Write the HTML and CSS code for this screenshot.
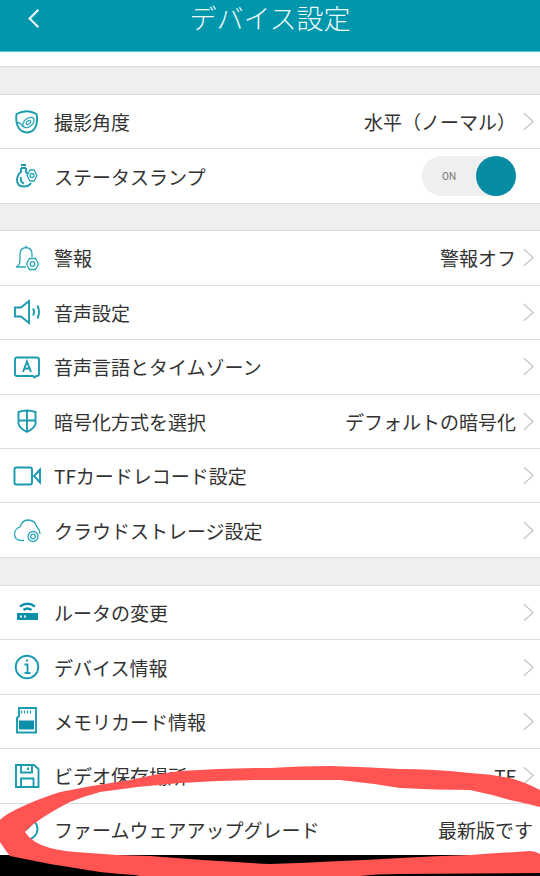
FILE: index.html
```html
<!DOCTYPE html>
<html lang="ja">
<head>
	<meta charset="utf-8">
	<title>デバイス設定</title>
	<link rel="stylesheet" href="styles.css">
</head>
<body>
<div class="screen">
	<div class="header">
		<svg class="back" viewBox="0 0 16 24"><path d="M13 2 L3 12 L13 22"/></svg>
		<div class="title">デバイス設定</div>
	</div>
	<div class="top_space"></div>

	<div class="group first">
		<div class="row">
			<svg class="icon" viewBox="0 0 28 28"><path class="thick" d="M3.5 6 Q14 0.5 23.5 6 Q25.5 17 20 22.5 Q14 26.5 8 22.5 Q2 17 3.5 6Z"/><path d="M4 14.5 Q8 14.5 10 19"/><ellipse cx="15.5" cy="14.5" rx="6.5" ry="4" transform="rotate(-38 15.5 14.5)"/><ellipse cx="15.5" cy="14.5" rx="2.6" ry="1.5" transform="rotate(-38 15.5 14.5)"/></svg>
			<div class="label">撮影角度</div>
			<div class="value">水平（ノーマル）</div>
			<svg class="arrow" viewBox="0 0 12 20"><path d="M1 1 L11 10 L1 19"/></svg>
		</div>
		<div class="row">
			<svg class="icon" viewBox="0 0 28 28"><path class="thick" d="M8 3 H13 M8 6 H13 M8 6 V10 Q4 13 4 18 Q4 24.5 11 24.5 Q16 24.5 18 21 M13 6 V10 L15 12"/><path class="thick" d="M8 15 Q7 20 11 21.5"/><path d="M17 8 L21 8 L24 13.5 L21 19 L17 19 L14 13.5Z"/><circle cx="19" cy="13.5" r="2"/></svg>
			<div class="label">ステータスランプ</div>
			<div class="toggle">
				<div class="toggle_text">ON</div>
				<div class="knob"></div>
			</div>
		</div>
	</div>

	<div class="group">
		<div class="row">
			<svg class="icon" viewBox="0 0 28 28"><path d="M3 23 Q7 22 7 16 L7 10 Q7 4 13 3.5 Q19 4 19 10 L19 13 M3 23 H13 M13 1.5 V3.5"/><path d="M16.5 14.5 L22.5 14.5 L25.5 20 L22.5 25.5 L16.5 25.5 L13.5 20Z"/><circle cx="19.5" cy="20" r="2.3"/></svg>
			<div class="label">警報</div>
			<div class="value">警報オフ</div>
			<svg class="arrow" viewBox="0 0 12 20"><path d="M1 1 L11 10 L1 19"/></svg>
		</div>
		<div class="row">
			<svg class="icon" viewBox="0 0 28 28"><path class="thick" d="M2 9.5 H8 L16 3 V25 L8 18.5 H2Z"/><path class="thick" d="M20 10.5 Q22 14 20 17.5 M24.5 7.5 Q27.5 14 24.5 20.5"/></svg>
			<div class="label">音声設定</div>
			<svg class="arrow" viewBox="0 0 12 20"><path d="M1 1 L11 10 L1 19"/></svg>
		</div>
		<div class="row">
			<svg class="icon" viewBox="0 0 28 28"><path class="thick" d="M4 4.5 H24 Q26 4.5 26 6.5 V21 Q26 23 24 23 H23 L21.5 24.5 L20 23 H4 Q2 23 2 21 V6.5 Q2 4.5 4 4.5Z"/><path class="thick" d="M10 19 L14 8.5 L18 19 M11.5 15.5 H16.5"/></svg>
			<div class="label">音声言語とタイムゾーン</div>
			<svg class="arrow" viewBox="0 0 12 20"><path d="M1 1 L11 10 L1 19"/></svg>
		</div>
		<div class="row">
			<svg class="icon" viewBox="0 0 28 28"><path class="thick" d="M5.5 5 Q14 2 22.5 5 V17 Q21 21.5 14 25 Q7 21.5 5.5 17Z M14 3.5 V24.5 M5.5 13.5 H22.5"/></svg>
			<div class="label">暗号化方式を選択</div>
			<div class="value">デフォルトの暗号化</div>
			<svg class="arrow" viewBox="0 0 12 20"><path d="M1 1 L11 10 L1 19"/></svg>
		</div>
		<div class="row">
			<svg class="icon" viewBox="0 0 28 28"><path class="thick" d="M3 5.5 H17 Q19 5.5 19 7.5 V20.5 Q19 22.5 17 22.5 H3 Q1.5 22.5 1.5 20.5 V7.5 Q1.5 5.5 3 5.5Z M27 7.5 V20.5 L21 14Z"/></svg>
			<div class="label">TFカードレコード設定</div>
			<svg class="arrow" viewBox="0 0 12 20"><path d="M1 1 L11 10 L1 19"/></svg>
		</div>
		<div class="row">
			<svg class="icon" viewBox="0 0 28 28"><path d="M11 24.5 H8 Q1.5 24 1.5 18 Q2 12.5 7 11 Q9 4 15 4 Q22 4 24 11 Q27 14 27 18"/><circle cx="20" cy="20.5" r="5"/><circle cx="20" cy="20.5" r="2.3"/></svg>
			<div class="label">クラウドストレージ設定</div>
			<svg class="arrow" viewBox="0 0 12 20"><path d="M1 1 L11 10 L1 19"/></svg>
		</div>
	</div>

	<div class="group third">
		<div class="row">
			<svg class="icon" viewBox="0 0 28 28"><path class="wifi" d="M7 7.5 Q14.5 2 22 7.5 M10.5 11 Q14.5 8 18.5 11"/><path class="solid" d="M4 14 H25 V21 H4Z"/><path class="dots" d="M7 17.5 H9 M11 17.5 H13"/></svg>
			<div class="label">ルータの変更</div>
			<svg class="arrow" viewBox="0 0 12 20"><path d="M1 1 L11 10 L1 19"/></svg>
		</div>
		<div class="row">
			<svg class="icon" viewBox="0 0 28 28"><circle class="thick" cx="14" cy="14" r="11.3"/><path class="thick" d="M11.5 11.5 H14.5 V20 M11.5 20 H17.5 M14 6.5 V8.5"/></svg>
			<div class="label">デバイス情報</div>
			<svg class="arrow" viewBox="0 0 12 20"><path d="M1 1 L11 10 L1 19"/></svg>
		</div>
		<div class="row">
			<svg class="icon" viewBox="0 0 28 28"><path class="thick" d="M6 1 H23 V25.5 H4 V11 L6 9Z"/><path d="M8.5 3.5 V6.5 M11.5 3.5 V6.5 M14.5 3.5 V6.5 M17.5 3.5 V6.5"/><path class="solid" d="M6 13.5 H21 V22.5 H6Z"/></svg>
			<div class="label">メモリカード情報</div>
			<svg class="arrow" viewBox="0 0 12 20"><path d="M1 1 L11 10 L1 19"/></svg>
		</div>
		<div class="row">
			<svg class="icon" viewBox="0 0 28 28"><path class="thick" d="M3 3 H21 L25.5 7 V25 H3Z M8 3 V10.5 H19 V3 M15 5.5 V8 M8 25 V16.5 H20.5 V25"/></svg>
			<div class="label">ビデオ保存場所</div>
			<div class="value">TF</div>
			<svg class="arrow" viewBox="0 0 12 20"><path d="M1 1 L11 10 L1 19"/></svg>
		</div>
		<div class="row last">
			<svg class="icon" viewBox="0 0 28 28"><circle class="thick" cx="14" cy="14" r="10.5"/><path class="thick" d="M14 7 V14 L18 10"/></svg>
			<div class="label">ファームウェアアップグレード</div>
			<div class="value">最新版です</div>
		</div>
	</div>
	<div class="navbar"></div>

	<svg class="scribble" viewBox="0 0 540 876"><path d="M540 790 Q525 782 510 778 Q490 774 470 773 Q435 769 400 769 Q365 767 330 766 Q300 766 270 768 Q225 768 180 771 Q155 774 130 780 Q95 785 60 792 Q35 800 15 810 Q5 815 0 820 L0 842 Q5 850 10 856 Q30 860 50 864 Q75 868 100 872 Q118 874 135 875 L140 876 L360 876 Q375 874 400 874 L540 873 L540 854 Q535 851 530 851 Q500 853 470 855 Q435 856 400 858 Q370 860 340 861 Q305 863 270 864 Q210 861 150 856 Q120 856 90 853 Q65 852 50 848 Q32 843 25 832 Q28 828 35 823 Q50 812 70 802 Q85 796 100 792 Q140 786 180 783 Q225 780 270 780 L340 780 Q370 783 400 788 Q435 790 470 790 Q490 794 510 800 Q525 803 540 807Z"/></svg>
</div>
</body>
</html>
```

FILE: styles.css
```css
html, body {
	margin: 0;
	padding: 0;
}

.screen {
	position: relative;
	width: 540px;
	height: 876px;
	overflow: hidden;
	background: #efefef;
	font-family: "Noto Sans CJK JP", "Noto Sans", sans-serif;
	color: #333333;
}

.header {
	display: flex;
	align-items: flex-start;
	justify-content: center;
	position: relative;
	height: 51px;
	background: #0097ac;
	border-bottom: 1px solid #5cc3d0;
}

.title {
	font-size: 27px;
	line-height: 36px;
	color: #eef9fa;
	font-weight: 300;
}

.back {
	position: absolute;
	left: 27px;
	top: 7px;
	width: 14px;
	height: 23px;
	fill: none;
	stroke: #eef9fa;
	stroke-width: 2.4;
}

.top_space {
	height: 14px;
	background: #ffffff;
	border-bottom: 1px solid #dddddd;
}

.group {
	margin-top: 26.4px;
	background: #ffffff;
	border-top: 1px solid #dddddd;
}

.group.first {
	margin-top: 27px;
}

.group.third {
	margin-top: 27px;
}

.row {
	display: flex;
	align-items: center;
	height: 53.45px;
	padding: 0 6px 0 13px;
	border-bottom: 1px solid #dddddd;
	font-size: 19px;
}

.row.last {
	height: 51.2px;
	border-bottom: 0;
}

.row.last .value {
	margin-right: 1px;
}

.icon {
	width: 28px;
	height: 28px;
	flex: none;
	margin-right: 13px;
	fill: none;
	stroke: #2ba6b8;
	stroke-width: 1.3;
}

.icon .thick {
	stroke-width: 1.9;
	stroke: #1b9bb0;
}

.icon .wifi {
	stroke-width: 2.4;
	stroke: #0a8fa8;
}

.icon .solid {
	fill: #0a8fa8;
	stroke: none;
}

.icon .dots {
	stroke: #ffffff;
	stroke-width: 2;
}

.label {
	flex: 1;
	white-space: nowrap;
}

.value {
	white-space: nowrap;
	margin-right: 7px;
}

.arrow {
	width: 11px;
	height: 19px;
	flex: none;
	fill: none;
	stroke: #c4c4c4;
	stroke-width: 1.3;
}

.toggle {
	display: flex;
	align-items: center;
	justify-content: space-between;
	width: 94px;
	height: 40px;
	margin-right: 18px;
	border-radius: 20px;
	background: #efefef;
}

.toggle_text {
	margin-left: 20px;
	font-family: Roboto, sans-serif;
	font-size: 10px;
	color: #777777;
}

.knob {
	width: 40px;
	height: 40px;
	border-radius: 50%;
	background: #078ca3;
}

.navbar {
	height: 30px;
	background: #000000;
}

.scribble {
	position: absolute;
	left: 0;
	top: 0;
	width: 540px;
	height: 876px;
	fill: #ff5452;
}
```
